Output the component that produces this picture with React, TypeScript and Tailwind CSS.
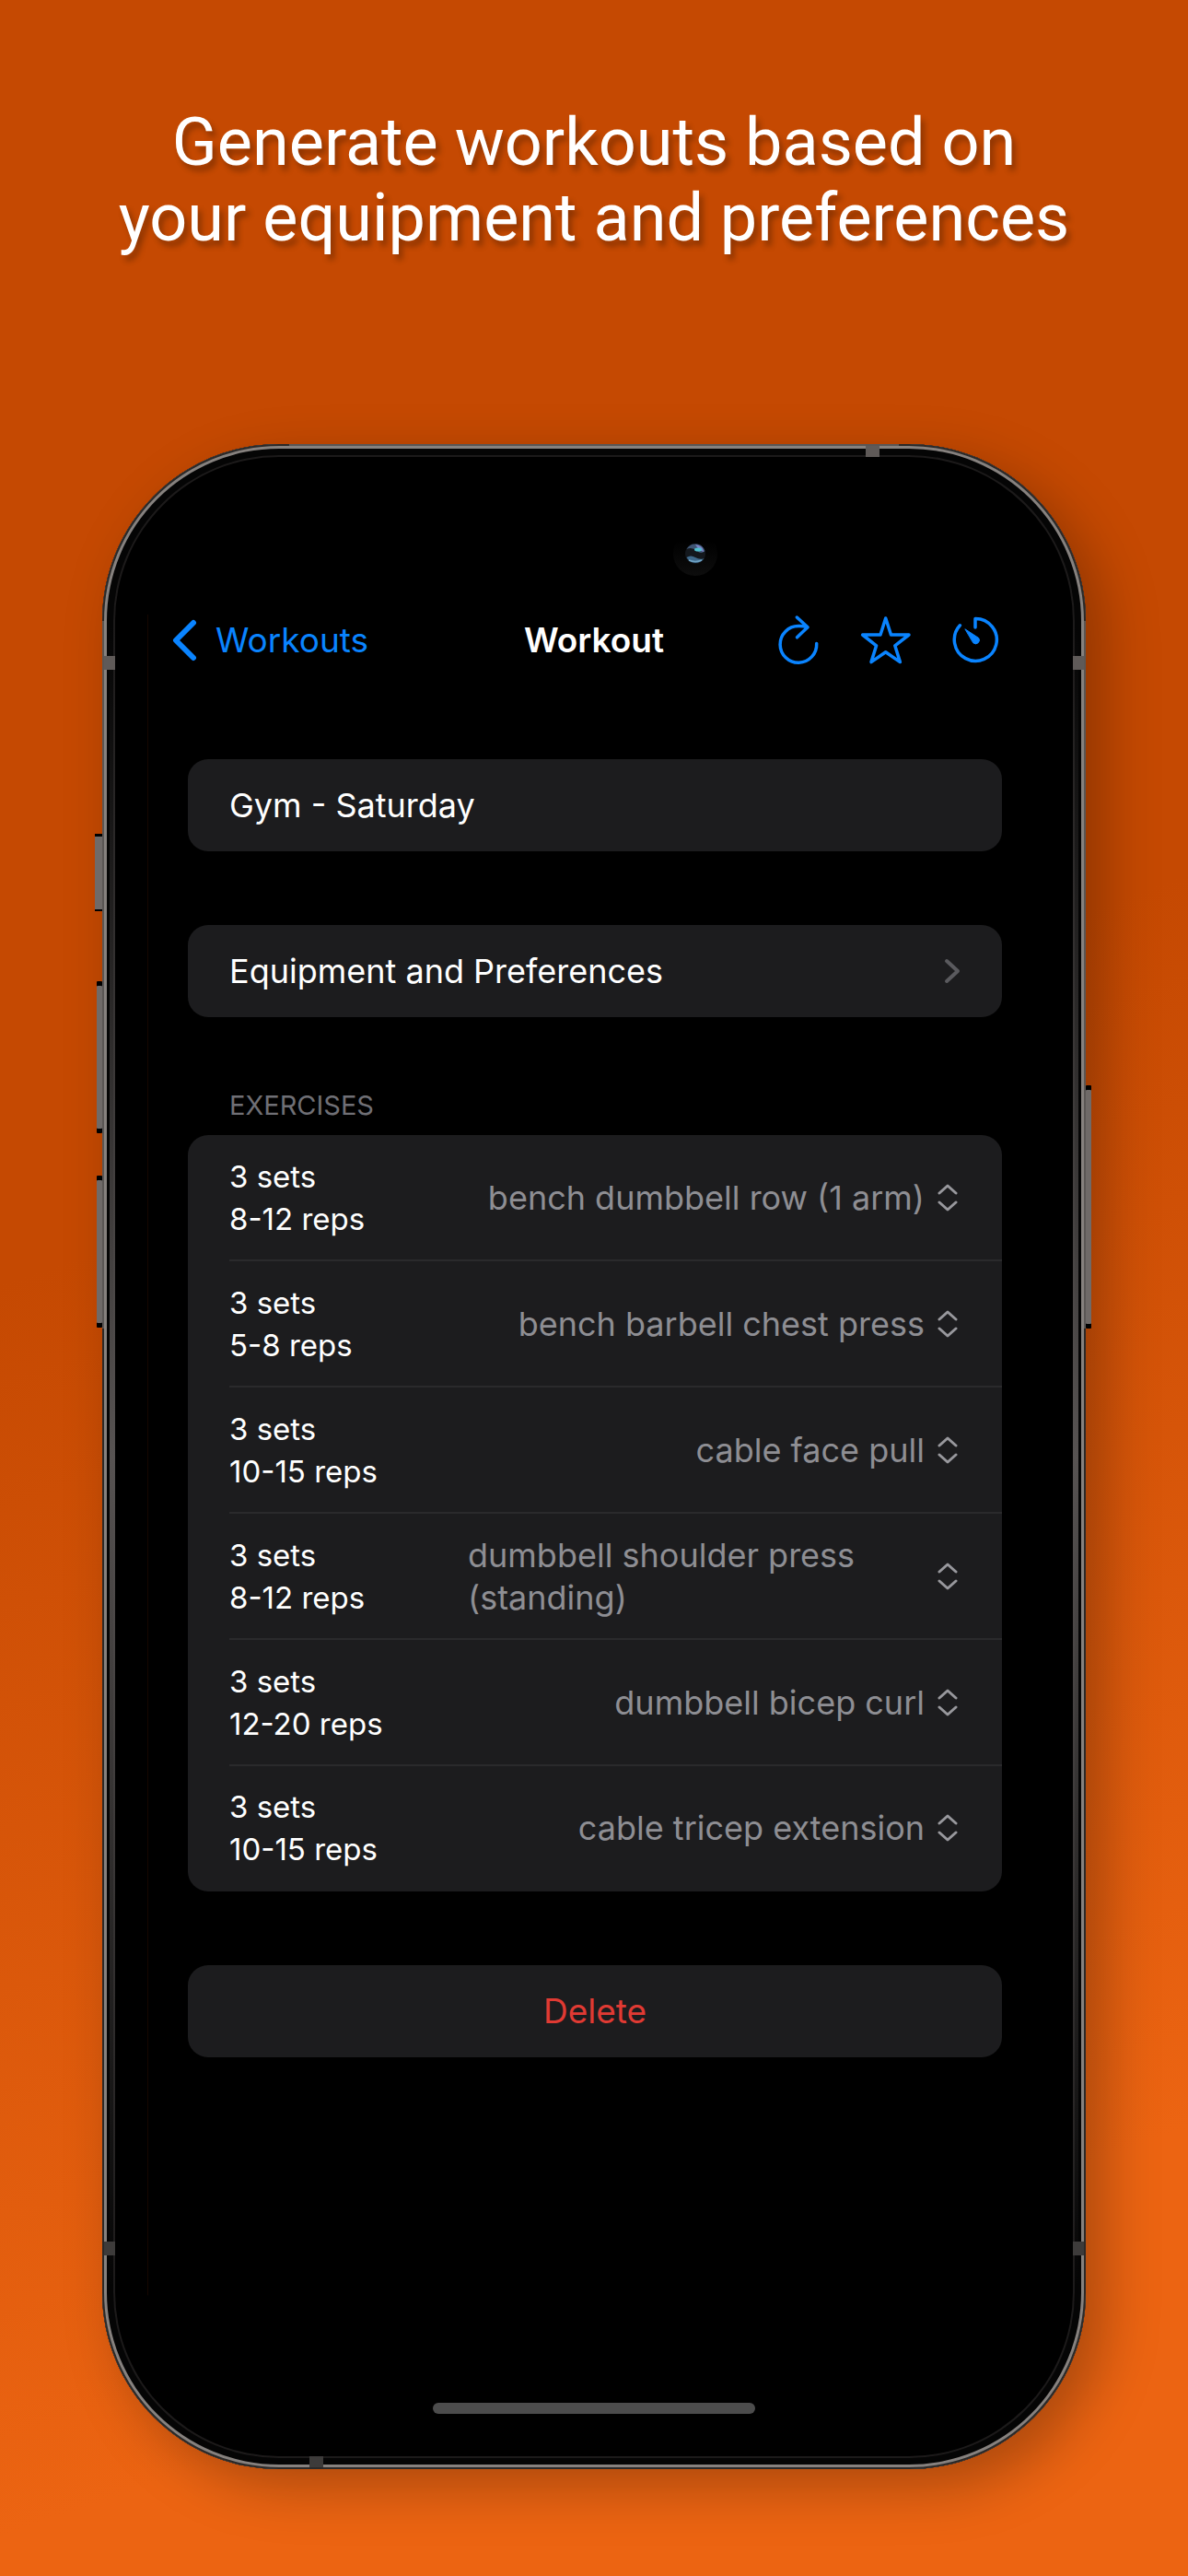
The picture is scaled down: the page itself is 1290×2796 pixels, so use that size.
import { useState } from "react";

type Exercise = { sets: string; reps: string; name: string };

const exercises: Exercise[] = [
  { sets: "3 sets", reps: "8-12 reps", name: "bench dumbbell row (1 arm)" },
  { sets: "3 sets", reps: "5-8 reps", name: "bench barbell chest press" },
  { sets: "3 sets", reps: "10-15 reps", name: "cable face pull" },
  { sets: "3 sets", reps: "8-12 reps", name: "dumbbell shoulder press (standing)" },
  { sets: "3 sets", reps: "12-20 reps", name: "dumbbell bicep curl" },
  { sets: "3 sets", reps: "10-15 reps", name: "cable tricep extension" },
];

function NavIcons() {
  return (
    <div className="flex items-center justify-end gap-[39px] pr-[36px]">
      <button type="button" aria-label="Regenerate workout">
        <svg width="56" height="60" viewBox="839 665 56 60" fill="none" stroke="#0a84ff" strokeWidth="3.5" strokeLinecap="round" strokeLinejoin="round">
          <path d="M886.7 698.5 A19.8 19.8 0 1 1 867 679.6 Q872 679.4 876.6 680.8" />
          <path d="M865.3 670 L877 680.8 L865.5 691.8" />
        </svg>
      </button>
      <button type="button" aria-label="Favourite">
        <svg width="56" height="60" viewBox="934 665 56 60" fill="none" stroke="#0a84ff" strokeWidth="3.5" strokeLinejoin="round">
          <path d="M961.7 671 L967.5 689 L987 689 L971.8 700.8 L977.4 718.6 L961.7 707.8 L946 718.6 L951.6 700.8 L936.6 689 L956 689 Z" />
        </svg>
      </button>
      <button type="button" aria-label="Timer">
        <svg width="56" height="60" viewBox="1029 665 56 60" fill="none" stroke="#0a84ff" strokeWidth="3.5" strokeLinecap="round" strokeLinejoin="round">
          <path d="M1042.4 678.8 A23 23 0 1 0 1059 671.4 L1059 681" />
          <path d="M1048.2 683 L1062.6 692.4 A4 4 0 0 1 1057 698 Z" fill="#0a84ff" strokeWidth="1" />
        </svg>
      </button>
    </div>
  );
}

function Camera() {
  return (
    <svg className="h-[48px] w-[48px]" viewBox="0 0 48 48" aria-hidden="true">
      <defs>
        <linearGradient id="halo" x1="0" y1="0" x2="0" y2="1">
          <stop offset="0.2" stopColor="#000" />
          <stop offset="1" stopColor="#0d0d0d" />
        </linearGradient>
      </defs>
      <circle cx="24" cy="24" r="24" fill="url(#halo)" />
      <circle cx="24" cy="24" r="11" fill="#14181d" />
      <path d="M14.5 19 A11 11 0 0 1 34.5 21 Q30 25 26 21 Q20 16 14.5 19Z" fill="#3f5574" />
      <path d="M24 14 A10 10 0 0 1 33.5 22 Q28 21 24 14Z" fill="#7b83c4" />
      <ellipse cx="27" cy="19.5" rx="4" ry="2" fill="#4fc0cf" />
      <path d="M14.5 28 Q19 25 24 28 T33.5 29 A11 11 0 0 1 14.5 28Z" fill="#3f6a8c" />
      <path d="M17 31 Q24 34 31 31" stroke="#6fa3c4" strokeWidth="1.5" fill="none" />
    </svg>
  );
}

// Side buttons, edge reflections and antenna bands of the phone body.
// The nested svgs pin their children to the right and bottom edges.
function Hardware() {
  return (
    <svg className="pointer-events-none absolute inset-0 h-full w-full overflow-visible" aria-hidden="true">
      <defs>
        <linearGradient id="edge" x1="0" y1="0" x2="0" y2="1">
          <stop offset="0" stopColor="#575352" stopOpacity="0" />
          <stop offset="0.5" stopColor="#575352" />
          <stop offset="1" stopColor="#575352" stopOpacity="0" />
        </linearGradient>
      </defs>
      <rect x="8" y="9%" width="6" height="82%" fill="url(#edge)" />
      <rect x="0" y="192" width="2" height="768" fill="#5a5654" />
      <rect x="19%" y="0" width="62%" height="2" fill="#5a5654" />
      <rect x="49" y="185" width="1" height="83%" fill="#160700" />
      <rect x="2" y="230" width="12" height="15" fill="#5f5a58" />

      <rect x="-8" y="423" width="8" height="84" fill="#000" />
      <rect x="-8" y="426" width="8" height="79" fill="#6f6a68" />
      <rect x="-6" y="583" width="6" height="165" rx="1" fill="#000" />
      <rect x="-6" y="588" width="6" height="155" rx="1" fill="#6f6a68" />
      <rect x="-6" y="794" width="6" height="165" rx="1" fill="#000" />
      <rect x="-6" y="799" width="6" height="155" rx="1" fill="#6f6a68" />

      <svg x="100%" overflow="visible">
        <rect x="-14" y="9%" width="6" height="82%" fill="url(#edge)" />
        <rect x="-2" y="192" width="2" height="768" fill="#5a5654" />
        <rect x="-14" y="230" width="12" height="15" fill="#5f5a58" />
        <rect x="-239" y="2" width="15" height="12" fill="#5f5a58" />
        <rect x="0" y="696" width="6" height="264" rx="1" fill="#000" />
        <rect x="0" y="701" width="6" height="254" rx="1" fill="#6f6a68" />
      </svg>
      <svg y="100%" overflow="visible">
        <rect x="2" y="-247" width="12" height="15" fill="#3d3b3a" />
        <rect x="225" y="-14" width="15" height="12" fill="#3d3b3a" />
      </svg>
      <svg x="100%" y="100%" overflow="visible">
        <rect x="-14" y="-247" width="12" height="15" fill="#3d3b3a" />
      </svg>
    </svg>
  );
}

function ExerciseRow({ exercise }: { exercise: Exercise }) {
  const [value, setValue] = useState(exercise.name);
  return (
    <li className="flex min-h-[137px] items-center justify-between border-b-2 border-[#2a2a2c] pr-[48px] last:min-h-[136px] last:border-transparent">
      <p className="shrink-0 text-[33px] leading-[46px] text-white">
        {exercise.sets}
        <br />
        {exercise.reps}
      </p>
      <label className="relative flex max-w-[532px] items-center gap-[14px]">
        <span className="text-[36px] leading-[46px] text-[#8e8e93]">{value}</span>
        <svg className="shrink-0" width="22" height="30" viewBox="0 0 22 30" fill="none" stroke="#98989d" strokeWidth="3" strokeLinecap="round" strokeLinejoin="round" aria-hidden="true">
          <path d="M2 10 L11 2 L20 10 M2 20 L11 28 L20 20" />
        </svg>
        <select
          aria-label={`Exercise, ${exercise.sets}, ${exercise.reps}`}
          className="absolute inset-0 h-full w-full cursor-pointer opacity-0"
          value={value}
          onChange={(e) => setValue(e.target.value)}
        >
          {exercises.map((e) => (
            <option key={e.name}>{e.name}</option>
          ))}
        </select>
      </label>
    </li>
  );
}

export default function App() {
  const [name, setName] = useState("Gym - Saturday");
  return (
    <main className="flex min-h-screen flex-col gap-[204px] bg-linear-[161deg,#c54902_0%,#c54902_43%,#ec6412_85%,#ec6412_100%] pt-[114px] pb-[115px] font-['Inter',sans-serif]">
      <h1 className="text-center font-['Roboto',sans-serif] text-[72px] leading-[82px] font-normal text-white [text-shadow:4px_6px_6px_rgba(0,0,0,0.3)]">
        Generate workouts based on
        <br />
        your equipment and preferences
      </h1>

      <div className="relative mx-[111px] flex flex-col rounded-[192px] bg-black px-[58px] pt-[95px] pb-[60px] shadow-[inset_0_0_0_2px_#2b2928,inset_0_0_0_5px_#86817e,inset_0_0_0_12px_#050505,inset_0_0_0_14px_#1c1a1a,20px_20px_60px_rgba(0,0,0,0.27)]">
        <Hardware />

        <div className="flex justify-center pl-[220px]">
          <Camera />
        </div>

        <header className="grid grid-cols-[1fr_auto_1fr] items-center py-10">
          <a href="#workouts" className="flex items-center gap-[19px] pl-[17px] text-[37px] leading-[60px] text-[#0a84ff]">
            <svg width="29" height="46" viewBox="0 0 29 46" fill="none" stroke="#0a84ff" strokeWidth="6" strokeLinecap="round" strokeLinejoin="round" aria-hidden="true">
              <path d="M24 4 L5 23 L24 42" />
            </svg>
            Workouts
          </a>
          <h2 className="text-[37px] leading-[60px] font-semibold text-white">Workout</h2>
          <NavIcons />
        </header>

        <div className="flex flex-col gap-20 pt-[59px] pr-[33px] pb-[375px] pl-[35px]">
          <input
            aria-label="Workout name"
            className="h-[100px] w-full rounded-[22px] bg-[#1c1c1e] px-[45px] text-[36px] text-white outline-none"
            value={name}
            onChange={(e) => setName(e.target.value)}
          />

          <button type="button" className="flex h-[100px] items-center justify-between rounded-[22px] bg-[#1c1c1e] px-[45px] text-[36px] text-white">
            Equipment and Preferences
            <svg width="18" height="28" viewBox="0 0 18 28" fill="none" stroke="#5a5a5e" strokeWidth="4" strokeLinecap="round" strokeLinejoin="round" aria-hidden="true">
              <path d="M3 3 L15 14 L3 25" />
            </svg>
          </button>

          <section className="flex flex-col gap-4">
            <h3 className="px-[45px] text-[29px] leading-[32px] text-[#6f6f75]">EXERCISES</h3>
            <ul className="flex flex-col rounded-[22px] bg-[#1c1c1e] pl-[45px]">
              {exercises.map((e) => (
                <ExerciseRow key={e.name} exercise={e} />
              ))}
            </ul>
          </section>

          <button type="button" className="h-[100px] rounded-[22px] bg-[#1c1c1e] text-[37px] text-[#e03a33]">
            Delete
          </button>
        </div>

        <div className="h-[12px] w-[350px] self-center rounded-full bg-[#4c4c4c]" />
      </div>
    </main>
  );
}
